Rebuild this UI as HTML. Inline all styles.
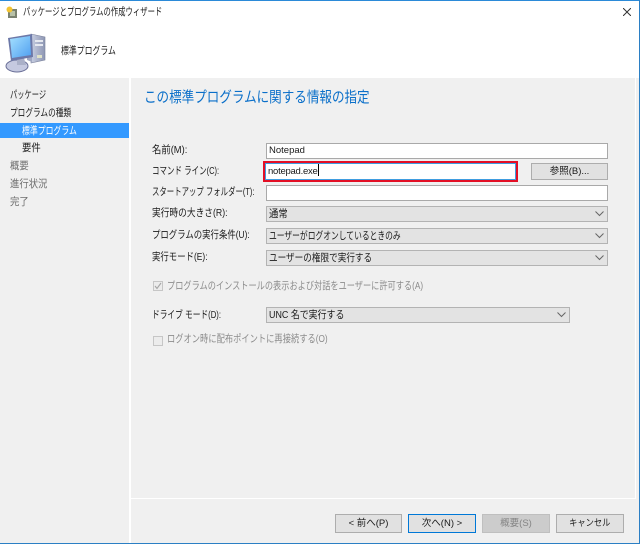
<!DOCTYPE html>
<html lang="ja">
<head>
<meta charset="utf-8">
<style>
html,body{margin:0;padding:0;background:#fff}
body{width:640px;height:544px;position:relative;overflow:hidden;font-family:"Liberation Sans","Noto Sans CJK JP",sans-serif;font-size:10.5px;color:#1a1a1a}
div{position:absolute;box-sizing:border-box;white-space:nowrap}
.l{height:14px;line-height:14px;transform-origin:0 50%}
.in{left:266px;height:16px;background:#fff;border:1px solid #a9a9a9;line-height:14px;padding-left:2px;font-size:9.5px}
.cb{left:266px;height:16px;background:#e3e3e3;border:1px solid #b3b3b3;line-height:15px;padding-left:2px}
.cb span{display:inline-block;transform-origin:0 50%}
.btn{background:#e1e1e1;border:1px solid #adadad;text-align:center;line-height:17px;font-size:9.5px}
.cb svg{position:absolute;right:3px;top:4px}
.chk{width:10px;height:10px;background:#ececec;border:1px solid #c6c6c6}
</style>
</head>
<body>
<div style="left:0;top:0;width:640px;height:1px;background:#2b8ad8"></div>
<div style="left:639px;top:0;width:1px;height:544px;background:#2b7fc4"></div>
<div style="left:0;top:543px;width:640px;height:1px;background:#2b7fc4"></div>

<svg style="position:absolute;left:6px;top:6px" width="12" height="13" viewBox="0 0 12 13">
<rect x="2" y="3" width="9" height="9" fill="#7a8270"/><rect x="4" y="5" width="5" height="5" fill="#b9c2a8"/><circle cx="3.500" cy="3.500" r="3" fill="#f3c431"/>
</svg>
<div class="l" style="left:23px;top:5px;transform:scaleX(.7)">パッケージとプログラムの作成ウィザード</div>
<svg style="position:absolute;left:623px;top:8px" width="8" height="8" viewBox="0 0 8 8"><path d="M0 0l8 8M8 0l-8 8" stroke="#333" stroke-width="1" fill="none"/></svg>

<svg style="position:absolute;left:0;top:20px" width="60" height="60" viewBox="0 0 60 60">
<defs>
<linearGradient id="s" x1="0" y1="0" x2="1" y2="1"><stop offset="0" stop-color="#a5e0ff"/><stop offset="1" stop-color="#4f9ff0"/></linearGradient>
<linearGradient id="t" x1="0" y1="0" x2="1" y2="0"><stop offset="0" stop-color="#c8cfe2"/><stop offset="1" stop-color="#8d96b3"/></linearGradient>
</defs>
<path d="M31 14l14 3v23l-14 3z" fill="url(#t)" stroke="#7a819c" stroke-width=".6"/>
<path d="M27 16l5-2v28l-5-2z" fill="#a0a8c2"/>
<rect x="35" y="20" width="8" height="2" fill="#e6e9f0"/><rect x="35" y="24" width="8" height="2" fill="#e6e9f0"/>
<rect x="37" y="35" width="5" height="3" fill="#dfe3c8"/>
<ellipse cx="17" cy="46" rx="11" ry="6" fill="#c5c9e0" stroke="#6a6f97"/>
<path d="M17 38h7l2 7h-9z" fill="#aab0c8"/>
<path d="M8 18l24-4 1 23-22 4z" fill="#6c78a8"/>
<path d="M10 19l20-3 1 19-19 3z" fill="url(#s)"/>
</svg>
<div class="l" style="left:61px;top:44px;transform:scaleX(.75)">標準プログラム</div>

<div style="left:0;top:78px;width:129px;height:465px;background:#f0f0f0"></div>
<div style="left:131px;top:78px;width:504px;height:420px;background:#f0f0f0"></div>
<div style="left:131px;top:499px;width:508px;height:44px;background:#f0f0f0"></div>
<div style="left:636px;top:78px;width:3px;height:421px;background:#f0f0f0"></div>

<div class="l" style="left:10px;top:88px;transform:scaleX(.69)">パッケージ</div>
<div class="l" style="left:10px;top:106px;transform:scaleX(.73)">プログラムの種類</div>
<div style="left:0;top:123px;width:129px;height:15px;background:#3399ff"></div>
<div class="l" style="left:22px;top:124px;color:#fff;transform:scaleX(.75)">標準プログラム</div>
<div class="l" style="left:22px;top:141px;transform:scaleX(.89)">要件</div>
<div class="l" style="left:10px;top:159px;color:#6d6d6d;transform:scaleX(.89)">概要</div>
<div class="l" style="left:10px;top:177px;color:#6d6d6d;transform:scaleX(.89)">進行状況</div>
<div class="l" style="left:10px;top:195px;color:#6d6d6d;transform:scaleX(.89)">完了</div>

<div class="l" style="left:144px;top:89px;height:18px;font-size:15px;line-height:18px;color:#0a6fc9;transform:scaleX(.837)">この標準プログラムに関する情報の指定</div>

<div class="l" style="left:152px;top:143px;transform:scaleX(.89)">名前(M):</div>
<div class="l" style="left:152px;top:164px;transform:scaleX(.715)">コマンド ライン(C):</div>
<div class="l" style="left:152px;top:185px;transform:scaleX(.705)">スタートアップ フォルダー(T):</div>
<div class="l" style="left:152px;top:206px;transform:scaleX(.83)">実行時の大きさ(R):</div>
<div class="l" style="left:152px;top:228px;transform:scaleX(.8)">プログラムの実行条件(U):</div>
<div class="l" style="left:152px;top:250px;transform:scaleX(.8)">実行モード(E):</div>

<div class="in" style="top:143px;width:342px">Notepad</div>
<div style="left:263px;top:161px;width:255px;height:21px;border:2px solid #e30f25"></div>
<div class="in" style="left:265px;top:163px;width:251px;height:17px;border-color:#3f9de0;padding-left:2px;line-height:15px;letter-spacing:-.25px">notepad.exe<span style="display:inline-block;width:1px;height:12px;background:#000;vertical-align:-2px"></span></div>
<div class="btn" style="left:531px;top:163px;width:77px;height:17px;line-height:15px">参照(B)...</div>
<div class="in" style="top:185px;width:342px"></div>

<div class="cb" style="top:206px;width:342px"><span style="transform:scaleX(.89)">通常</span><svg width="9" height="6" viewBox="0 0 9 6"><path d="M.5.5l4 4 4-4" fill="none" stroke="#666" stroke-width="1"/></svg></div>
<div class="cb" style="top:228px;width:342px"><span style="transform:scaleX(.74)">ユーザーがログオンしているときのみ</span><svg width="9" height="6" viewBox="0 0 9 6"><path d="M.5.5l4 4 4-4" fill="none" stroke="#666" stroke-width="1"/></svg></div>
<div class="cb" style="top:250px;width:342px"><span style="transform:scaleX(.82)">ユーザーの権限で実行する</span><svg width="9" height="6" viewBox="0 0 9 6"><path d="M.5.5l4 4 4-4" fill="none" stroke="#666" stroke-width="1"/></svg></div>

<div class="chk" style="left:153px;top:281px"><svg style="position:absolute;left:0;top:0" width="8" height="8" viewBox="0 0 8 8"><path d="M1 4l2 2.500L7 1" fill="none" stroke="#a5a5a5" stroke-width="1.100"/></svg></div>
<div class="l" style="left:167px;top:279px;color:#8c8c8c;transform:scaleX(.78)">プログラムのインストールの表示および対話をユーザーに許可する(A)</div>

<div class="l" style="left:152px;top:308px;transform:scaleX(.735)">ドライブ モード(D):</div>
<div class="cb" style="top:307px;width:304px"><span style="transform:scaleX(.85)">UNC 名で実行する</span><svg width="9" height="6" viewBox="0 0 9 6"><path d="M.5.5l4 4 4-4" fill="none" stroke="#666" stroke-width="1"/></svg></div>

<div class="chk" style="left:153px;top:336px"></div>
<div class="l" style="left:167px;top:332px;color:#8c8c8c;transform:scaleX(.787)">ログオン時に配布ポイントに再接続する(O)</div>

<div class="btn" style="left:335px;top:514px;width:67px;height:19px">&lt; 前へ(P)</div>
<div class="btn" style="left:408px;top:514px;width:68px;height:19px;border:1px solid #0078d7;line-height:17px">次へ(N) &gt;</div>
<div class="btn" style="left:482px;top:514px;width:68px;height:19px;background:#cccccc;border-color:#bfbfbf;color:#858585">概要(S)</div>
<div class="btn" style="left:556px;top:514px;width:68px;height:19px"><span style="display:inline-block;transform:scaleX(.87)">キャンセル</span></div>
</body>
</html>
